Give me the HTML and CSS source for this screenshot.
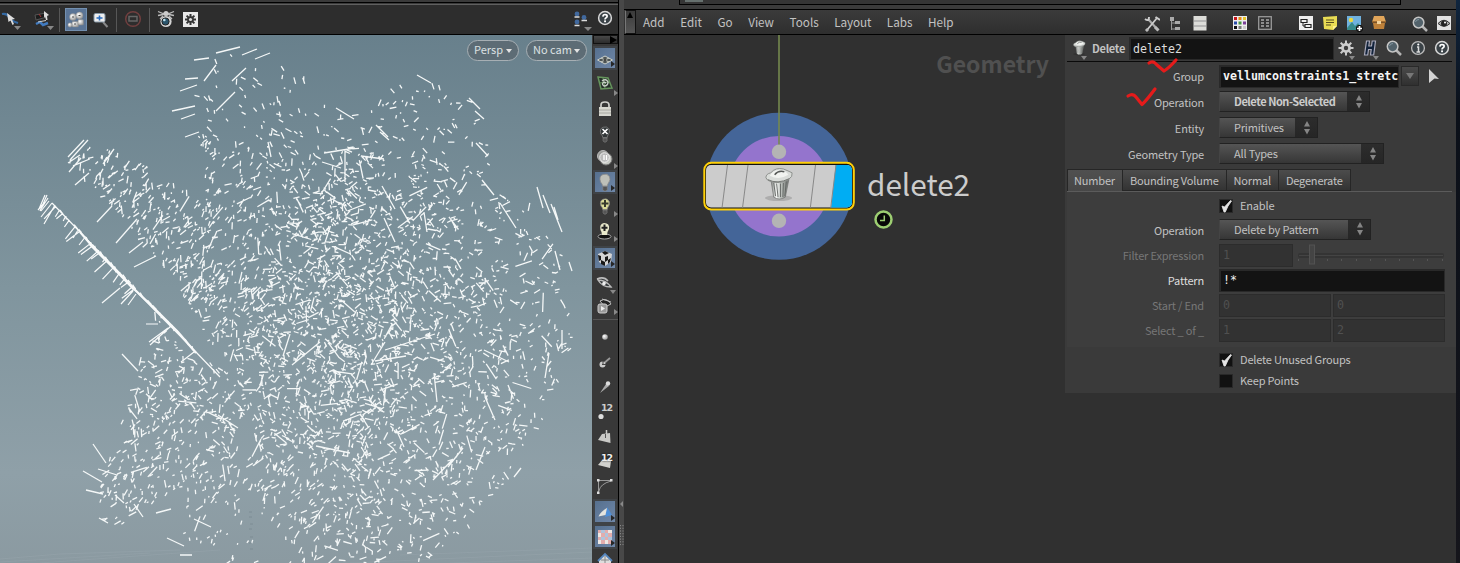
FILE: index.html
```html
<!DOCTYPE html>
<html lang="en">
<head>
<meta charset="utf-8">
<title>Geometry - delete2</title>
<link rel="stylesheet" href="styles.css">
</head>
<body>
<svg class="defs" width="0" height="0">
  <defs>
    <linearGradient id="can" x1="0" y1="0" x2="1" y2="0"><stop offset="0" stop-color="#777b78"/><stop offset=".3" stop-color="#f5f7f5"/><stop offset=".65" stop-color="#a9aeaa"/><stop offset="1" stop-color="#696c6a"/></linearGradient>
    <radialGradient id="ball" cx=".35" cy=".35" r=".7"><stop offset="0" stop-color="#fff"/><stop offset="1" stop-color="#999"/></radialGradient>
    <symbol id="trash" viewBox="0 0 30 34">
      <ellipse cx="14" cy="31" rx="14" ry="3" fill="#000" opacity=".15"/>
      <path d="M6 11L9 30Q15 34 21 30L25 10Z" fill="url(#can)" stroke="#707270" stroke-width=".7"/>
      <path d="M9 15L11 29M12 16L13.500 30M16 16V30M19 15.500L18.500 30M22 14L20.500 29" stroke="#5d605e" stroke-width=".9" fill="none"/>
      <path d="M1 10Q1 6 6 5Q11 -1 19 1Q24 3 28 5Q29 9 24 12Q15 17 6 14Q2 13 1 10Z" fill="#d9dcd9" stroke="#8b8e8b"/>
      <path d="M5 8Q8 2 16 2Q22 3 24 7Q15 13 5 8Z" fill="#f1f3f0"/>
      <path d="M10 7Q14 2 20 4" stroke="#555856" stroke-width="1.500" fill="none"/>
      <path d="M3 12Q13 17 25 11" stroke="#737673" fill="none"/>
    </symbol>
    <symbol id="help" viewBox="0 0 16 16"><circle cx="8" cy="8" r="6.400" fill="#3a4247" stroke="#d8d8d8" stroke-width="1.500"/><path d="M5.900 6.600Q6 4.500 8 4.500Q10.200 4.600 10.100 6.300Q10 7.300 8.800 7.900Q8 8.300 8 9.500" fill="none" stroke="#fff" stroke-width="1.700"/><rect x="7.100" y="10.400" width="1.900" height="1.800" fill="#fff"/></symbol>
    <symbol id="search" viewBox="0 0 16 16"><path d="M10 10L15 15" stroke="#b5b5b5" stroke-width="2.500"/><circle cx="6.600" cy="6.600" r="5.300" fill="#52626b" stroke="#c5c5c5" stroke-width="1.500"/><path d="M3.500 6Q4 3.500 7 3.500" stroke="#8195a0" fill="none"/></symbol>
    <symbol id="gear" viewBox="0 0 16 16"><path d="M8 .5V15.500M.5 8H15.500M2.700 2.700L13.300 13.300M13.300 2.700L2.700 13.300" stroke="currentColor" stroke-width="2"/><circle cx="8" cy="8" r="3.600" fill="none" stroke="currentColor" stroke-width="2.600"/><circle cx="8" cy="8" r="2.200" fill="#3a3a3a"/></symbol>
    <symbol id="bulb" viewBox="0 0 16 20"><path d="M5.500 14Q5.500 12 3.500 10Q1.500 4 6 2.500Q10 1 12.500 4.500Q14 8 11.500 11Q10.500 12 10.500 14Z" fill="currentColor" stroke="#888" stroke-width=".8"/><path d="M5.800 14.500H10.300V17.500L9 19H7L5.800 17.500Z" fill="#555" stroke="#888" stroke-width=".6"/></symbol>
    <symbol id="updown" viewBox="0 0 8 14"><path d="M4 0L7 5.500H1ZM4 13.500L1 8H7Z" fill="#858585"/></symbol>
    <symbol id="tick" viewBox="0 0 14 14"><path d="M3 7L5.500 8L11.500 1.500L12.500 2Q8.500 7 6.300 13H5Z" fill="#e4e4e4" stroke="#e4e4e4" stroke-width=".8"/></symbol>
  </defs>
</svg>

<div class="app">
  <section class="viewer">
    <div class="viewer-main">
      <header class="viewer-bar">
        <svg class="i-select" width="22" height="22"><path d="M2 6Q7 5 9 9T18 15" fill="none" stroke="#3469a3" stroke-width="2.200"/><path d="M7 5L15 11L12 11.500L14 16L12.500 17L10.500 12.500L8.500 14Z" fill="#ddd"/><path d="M14 18H21L17.500 22Z" fill="#888"/></svg>
        <svg class="i-snap" width="22" height="22"><path d="M2 7L13 5L14 9L3 12Z" fill="#1c1c1c" stroke="#555"/><path d="M3 16L7 14L10 17L15 15" fill="none" stroke="#417bc0" stroke-width="2.500"/><path d="M5 14L13 12.500" stroke="#ccc"/><path d="M6 6L8 9" stroke="#a33"/><path d="M11 3L16 7L14 8L14.500 12L13 12L12 8.500L11 10Z" fill="#ddd"/><path d="M14 18H21L17.500 22Z" fill="#888"/></svg>
        <i class="vsep s1"></i>
        <span class="i-active"><svg width="20" height="22"><g fill="url(#ball)" stroke="#888" stroke-width=".4"><circle cx="7" cy="8" r="3.500"/><circle cx="13.500" cy="6.500" r="3.500"/><rect x="6" y="12.500" width="6.500" height="5.500" rx="1"/><rect x="12" y="10.500" width="5.500" height="5.500" rx="1"/><circle cx="4" cy="16" r="2.200"/></g><path d="M6 8H8M12.500 6.500H14.500M8 15H10" stroke="#444"/></svg></span>
        <svg class="i-zoom" width="18" height="18"><path d="M10 10L14.500 15" stroke="#888" stroke-width="2"/><rect x="1" y="1.500" width="11" height="8.500" rx="1.500" fill="#eee" stroke="#8496a5"/><path d="M6.500 3.500V8.500M3.500 6H9.500" stroke="#266abe" stroke-width="1.600"/></svg>
        <i class="vsep s2"></i>
        <svg class="i-stop" width="18" height="18"><circle cx="9" cy="9" r="7.300" fill="none" stroke="#713f3f" stroke-width="1.500"/><rect x="5" y="6.500" width="8" height="4.500" fill="none" stroke="#666" stroke-width="1.500"/></svg>
        <i class="vsep s3"></i>
        <svg class="i-bug" width="18" height="18"><path d="M1 1.500L6 3.500L12 3.500L17 1.500M1 5.500L6 4.500H12L17 5.500M3 9L6 6M15 9L12 6" stroke="#bbb" stroke-width="1.300" fill="none"/><circle cx="9" cy="3.500" r="2.500" fill="#ccc"/><circle cx="9" cy="11.500" r="5.600" fill="#d3d3d3"/><circle cx="8.500" cy="11.500" r="3.600" fill="#2b556c" stroke="#222"/><circle cx="7.300" cy="10" r="1.300" fill="#bfe1ee"/></svg>
        <svg class="i-opts" width="15" height="15"><rect width="15" height="15" fill="#e8e8e8"/><g stroke="#333" stroke-width="2"><path d="M7.500 2V13M2 7.500H13M3.600 3.600L11.400 11.400M11.400 3.600L3.600 11.400"/></g><circle cx="7.500" cy="7.500" r="3.300" fill="#333"/><circle cx="7.500" cy="7.500" r="1.600" fill="#ddd"/></svg>
        <span class="grow"></span>
        <svg class="i-tree" width="20" height="22"><g fill="#41699e"><circle cx="4" cy="3" r="2.400"/><circle cx="4" cy="11" r="2.400"/><circle cx="11" cy="6.500" r="2.400"/></g><path d="M1.500 6H6.500M1.500 14.500H6.500M8.500 9.500H14" stroke="#ddd" stroke-width="1.300"/><path d="M11 16H19L15 20Z" fill="#888"/></svg>
        <svg class="i-help" width="16" height="16"><use href="#help"/></svg>
      </header>
      <div class="viewport">
        <svg class="cloud" viewBox="0 35 592 528" width="592" height="528">
          <g stroke="#a3b0b6" opacity=".25" fill="none"><path d="M0 559L60 554L180 550M0 562L150 553M40 563L220 550M400 555L592 548M350 563L592 552M450 563L592 558"/></g>
          <path id="strokes" fill="none" stroke="#f4f7f7" stroke-width="1.300"/>
          <path id="spine" fill="none" stroke="#f8fafa" stroke-width="1.200"/>
          <path d="M80 232L92 246" stroke="#f8fafa" stroke-width="2" fill="none"/>
          <path d="M90 244L110 264L134 289" stroke="#f8fafa" stroke-width="3" fill="none"/>
          <path d="M132 287L152 306L178 332L196 353" stroke="#f8fafa" stroke-width="2.200" fill="none"/>
          <path d="M249 512h3M249 517h3M250 524h3M249 529h3M250 537h3M249 543h3M250 549h3" stroke="#6e7f87" opacity=".5"/>
        </svg>
        <div class="pills"><button class="pill">Persp<b></b></button><button class="pill">No cam<b></b></button></div>
      </div>
    </div>
    <aside class="display-bar">
      <div class="mini"><svg width="8" height="8"><path d="M1 0L8 4L1 8Z" fill="#000"/></svg></div>
      <div class="cell on c24"><svg width="18" height="20"><path d="M1.500 12L9 8L16.500 12L9 16Z" fill="#4e5555" stroke="#cbd0ca"/><path d="M5 10L13 14M13 10L5 14" stroke="#cfd3cc"/><path d="M7 12L9 11L11 12L9 13Z" fill="#222"/></svg></div>
      <div class="cell more c27"><svg width="18" height="18"><path d="M2 2L12 3L16 13L5 14Z" fill="#25302a" stroke="#65945c" stroke-width="1.500"/><path d="M3 8L14 7M7 3L9 13" stroke="#65945c"/><path d="M6 6Q10 3 12 7Q12 11 8 11Q5 9 8 7L10 8" fill="none" stroke="#c8d0c8" stroke-width="1.400"/></svg></div>
      <div class="cell c24"><svg width="16" height="18"><path d="M4 8V5Q4 2 8 2T12 5V8" fill="none" stroke="#d0d0cd" stroke-width="1.700"/><rect x="2" y="7" width="12" height="9" fill="#d7d7d0"/><path d="M2 10H14M2 13H14" stroke="#a8a8a2"/></svg></div>
      <div class="cell c25"><svg width="16" height="18" class="dark-bulb"><use href="#bulb"/><path d="M5.500 4L10.500 9M10.500 4L5.500 9" stroke="#fff" stroke-width="1.600"/></svg></div>
      <div class="cell more c24"><svg width="18" height="18"><circle cx="7" cy="7" r="5.500" fill="#9b9c99" stroke="#bbb"/><circle cx="10" cy="10" r="6" fill="#c8cac4" stroke="#777"/><circle cx="8.500" cy="8.500" r="4.800" fill="#bbb" stroke="#eee"/><path d="M8 6V11M10.500 6V11" stroke="#fff" stroke-width="1.300"/></svg></div>
      <div class="cell on c24"><svg width="16" height="20" class="grey-bulb"><use href="#bulb"/></svg></div>
      <div class="cell more c24"><svg width="16" height="18" class="yellow-bulb"><use href="#bulb"/><path d="M8 3V10M4.500 6.500H11.500" stroke="#363b2d" stroke-width="2"/></svg></div>
      <div class="cell more c28 raise"><svg width="16" height="20"><ellipse cx="7.500" cy="15.500" rx="6.500" ry="2.500" fill="#111" stroke="#aaa"/><path d="M5 14Q5 11 3.500 9Q2 3 7 2Q13 2 12 8Q10 11 10 14Z" fill="#e9e9cc"/><path d="M7.500 3.500V10M4.500 6.800H10.500" stroke="#222" stroke-width="2"/></svg></div>
      <div class="cell on c24"><svg width="18" height="20"><path d="M2 6L9 3L16 6L15 14L9 18L3 14Z" fill="#d4d4d4"/><path d="M6 4.500L9 3L13 5L9 7ZM2 7L5 8V12L3 13ZM5 12L9 14V18L5 16ZM9 9L12 8V12L9 14ZM12 12L15 10L14 14L12 16Z" fill="#181818"/></svg></div>
      <div class="cell c26 down"><svg width="18" height="16"><path d="M1 4Q8 1 12 6M2 5Q6 12 15 12Q10 5 2 5Z" fill="#33373a" stroke="#bbb" stroke-width="1.500"/><circle cx="8" cy="8.500" r="1.800" fill="#eee"/></svg></div>
      <div class="cell more c23 raise"><svg width="18" height="18"><path d="M4 4Q11 0 15 7L9 10Z" fill="#242424" stroke="#bbb"/><path d="M6 2L15 5" stroke="#bbb"/><rect x="2" y="7" width="9" height="9" rx="2" fill="#999" stroke="#ccc"/><path d="M5 9L9 11.500L5 14Z" fill="#eee"/></svg></div>
      <i class="hsep"></i>
      <div class="cell c25"><svg width="16" height="16"><circle cx="8" cy="8" r="2.800" fill="url(#ball)"/></svg></div>
      <div class="cell c25"><svg width="16" height="16"><path d="M6 10L13 4" stroke="#999" stroke-width="1.800"/><circle cx="5.500" cy="10.500" r="3" fill="#ccc"/><path d="M6 11V7M5 10.500H9" stroke="#444"/></svg></div>
      <div class="cell c25"><svg width="16" height="16"><path d="M3 14L9 5L12 7Z" fill="#aaa"/><circle cx="11" cy="4.500" r="2.200" fill="#ddd"/></svg></div>
      <div class="cell c25 num"><span>12</span><svg width="16" height="16"><circle cx="4" cy="12.500" r="2.600" fill="#ddd"/></svg></div>
      <div class="cell c25"><svg width="18" height="18"><path d="M2 12L6 6L14 5L14.500 15Z" fill="#c9c9c6"/><path d="M10.500 10V2" stroke="#c9c9c6" stroke-width="1.500"/><path d="M9.500 10V6" stroke="#555"/></svg></div>
      <div class="cell c25 num mid"><svg width="18" height="18"><path d="M2 12L7 6L15 8L14 15Z" fill="#d1d1cd"/></svg><span>12</span></div>
      <div class="cell c25"><svg width="18" height="18"><path d="M2.500 15V2.500H16M3 13Q4 6 15 3" fill="none" stroke="#999" stroke-width="1"/><path d="M1 1h2.500v2.500H1ZM14 1h2.500v2.500H14ZM1 13.500h2.500V16H1Z" fill="#ddd"/></svg></div>
      <div class="cell on c25"><svg width="18" height="18"><path d="M11 4L16 12L9 14Z" fill="#4e8fd8"/><path d="M2.500 13.500Q5 8 11 5L9.500 12Z" fill="#e4e4df"/></svg></div>
      <div class="cell on c25"><svg width="14" height="14"><rect width="14" height="14" fill="#ede8e4"/><path d="M0 0h3v3H0ZM7 0h3v3H7ZM3 3h4v4H3ZM10 3h4v4h-4ZM0 7h3v3H0ZM7 7h3v3H7ZM3 10h4v4H3ZM10 10h4v4h-4Z" fill="#e3adad"/><path d="M3 0h4v3H3ZM7 3h3v4H7ZM3 7h4v3H3ZM10 7h4v3h-4Z" fill="#afc5dc"/></svg></div>
      <div class="cell c25 top"><svg width="18" height="18"><path d="M3 11L9 5L15 11V16H3Z" fill="#ddd"/><path d="M2 12L9 5L16 12" fill="none" stroke="#5686bd" stroke-width="1.800"/><path d="M9 7V16M5 11H13" stroke="#888"/></svg></div>
    </aside>
    <div class="splitter"><svg width="5" height="50"><path d="M4 1V7L1 4Z" fill="#888"/><path d="M1.500 25V46M4 25V46" stroke="#888" stroke-dasharray="1.200 1.500"/></svg></div>
  </section>

  <section class="network">
    <div class="pathbar"><span class="pathbox"><i></i></span></div>
    <nav class="menu">
      <span class="grip"><svg width="8" height="8"><path d="M4 1L7 7H1Z" fill="#000"/></svg></span>
      <a>Add</a><a>Edit</a><a>Go</a><a>View</a><a>Tools</a><a>Layout</a><a>Labs</a><a>Help</a>
      <span class="grow"></span>
      <svg class="m1" width="16" height="16"><path d="M4 3L14 14" stroke="#aaa" stroke-width="2.200"/><path d="M13 2L3 14" stroke="#ccc" stroke-width="1.800"/><path d="M1 3Q5 6 5 1M11.500 1L16 4" stroke="#ccc" stroke-width="2" fill="none"/><path d="M2 13L4 15M11 11L14.500 14.500" stroke="#bbb" stroke-width="3"/></svg>
      <svg class="m2" width="12" height="16"><path d="M2.500 3V14M2.500 7H6M2.500 13H6" stroke="#999" fill="none"/><path d="M1 1h4v4H1ZM6 5h5v3H6ZM6 11h5v3H6Z" fill="#aaa"/></svg>
      <svg class="m3" width="14" height="15"><rect x=".5" width="13" height="14.500" fill="#ddddd9"/><path d="M1 5H13M1 10H13" stroke="#aaa" stroke-width="1.500"/></svg>
      <svg class="m4" width="14" height="14"><rect width="14" height="14" fill="#eee"/><path fill="#c8161d" d="M1 1h3v3H1Z"/><path fill="#e58b19" d="M5.500 1h3v3h-3Z"/><path fill="#e7c529" d="M10 1h3v3h-3Z"/><path fill="#284ba8" d="M1 5.500h3v3H1Z"/><path fill="#43953f" d="M5.500 5.500h3v3h-3Z"/><path fill="#7b3f98" d="M10 5.500h3v3h-3Z"/><path fill="#111" d="M1 10h3v3H1Z"/><path fill="#777" d="M5.500 10h3v3h-3Z"/><path fill="#ccc" d="M10 10h3v3h-3Z"/></svg>
      <svg class="m5" width="14" height="14"><rect x=".7" y=".7" width="12.600" height="12.600" fill="#333" stroke="#999" stroke-width="1.300"/><path d="M3 4h3M8 4h3M3 7h3M8 7h3M3 10h3M8 10h3" stroke="#aaa" stroke-width="1.600"/></svg>
      <svg class="m6" width="14" height="14"><rect width="14" height="14" fill="#eee"/><path d="M2 3.500h6v3H2ZM6 8.500h6v3H6Z" fill="#eee" stroke="#222" stroke-width="1.200"/><path d="M4 7V10H6" stroke="#222" fill="none"/></svg>
      <svg class="m7" width="14" height="14"><path d="M0 1L14 0V10L10 14L1 13Z" fill="#e9dc54"/><path d="M3 4H11M3 6.500H11M3 9H8" stroke="#564e20" stroke-width="1.200"/><path d="M10 14V10H14Z" fill="#fff38c"/></svg>
      <svg class="m8" width="16" height="16"><rect width="14" height="14" fill="#70b2df"/><circle cx="4" cy="4" r="2.200" fill="#ead841"/><path d="M0 12L5 6L8 10L11 7L14 11V14H0Z" fill="#378a8b"/><path d="M12.500 9V16M9 12.500H16" stroke="#111" stroke-width="4"/><path d="M12.500 10V15M10 12.500H15" stroke="#fff" stroke-width="1.700"/></svg>
      <svg class="m9" width="16" height="14"><path d="M2 7H14L13 13H3Z" fill="#bd8039"/><path d="M3 0H13L15 6H1Z" fill="#e0a55a"/><path d="M1 6H15" stroke="#8f5c26" stroke-width="1.500"/><rect x="6" y="5" width="4" height="3" fill="#f0d29c"/></svg>
      <svg class="m10" width="16" height="16"><use href="#search"/></svg>
      <svg class="m11" width="14" height="14"><rect width="14" height="14" fill="#e2e2e2"/><path d="M1 7.500Q7 1 13 7.500Q7 13 1 7.500Z" fill="#aaa" stroke="#333"/><circle cx="7" cy="7.500" r="3" fill="#222"/><circle cx="8" cy="6.500" r="1" fill="#fff"/></svg>
    </nav>
    <div class="work">
      <div class="canvas">
        <div class="context">Geometry</div>
        <svg class="node" width="441" height="528" viewBox="624 35 441 528">
          <circle cx="779" cy="186.300" r="73.500" fill="#446598"/>
          <circle cx="779" cy="186.300" r="50.300" fill="#9474cd"/>
          <path d="M779 35V152" stroke="#75894f" stroke-width="1.600"/>
          <circle cx="779" cy="151.800" r="7.200" fill="#b4b4b4"/><circle cx="779" cy="220.800" r="7.200" fill="#b4b4b4"/>
          <rect x="704.300" y="162.800" width="149.500" height="46.800" rx="7" fill="#111" stroke="#ffd008" stroke-width="2"/>
          <clipPath id="nodeclip"><rect x="706" y="165" width="146" height="42.500" rx="5"/></clipPath>
          <g clip-path="url(#nodeclip)"><path d="M706 165H852V208H706Z" fill="#ccc"/><path d="M835.700 165H852V208H831Z" fill="#00adf3"/><path d="M727.500 165L722 208M748 165L742.500 208M815.500 165L810.300 208M836 165L830.700 208" stroke="#888"/></g>
          <svg x="764.500" y="168" width="30" height="33"><use href="#trash"/></svg>
          <circle cx="883.500" cy="219.500" r="8" fill="#080808" stroke="#9dce72" stroke-width="2.500"/><path d="M884.300 215.500V220.500H880" fill="none" stroke="#9dce72" stroke-width="1.500"/>
        </svg>
        <div class="node-name">delete2</div>
      </div>
      <div class="params">
        <div class="name-row">
          <span class="dropicon trashi"><svg width="13" height="16"><use href="#trash"/></svg></span>
          <strong>Delete</strong>
          <div class="field dark name">delete2</div>
          <span class="tools">
            <span class="dropicon"><svg width="16" height="16" class="gear"><use href="#gear"/></svg></span>
            <span class="dropicon"><svg width="16" height="16"><path d="M4.500 1H7.500L6.800 6H9.500L10.200 1H13.500L11.700 15H8.500L9.200 9.500H6.500L5.700 15H2.500Z" fill="#12233b" stroke="#aab" stroke-width="1.200"/></svg></span>
            <span><svg width="16" height="16"><use href="#search"/></svg></span>
            <span><svg width="16" height="16"><circle cx="8" cy="8" r="6.400" fill="#3a4247" stroke="#bbb" stroke-width="1.300"/><path d="M7 7H8.500V11.500M6.500 12H10" stroke="#ddd" stroke-width="1.500" fill="none"/><circle cx="8.300" cy="4.500" r="1.100" fill="#fff"/></svg></span>
            <span><svg width="16" height="16"><use href="#help"/></svg></span>
          </span>
        </div>
        <div class="rows main">
          <div class="row"><label>Group</label><div class="field dark group">vellumconstraints1_stretc</div><button class="drop"><svg width="8" height="6"><path d="M0 0H8L4 6Z" fill="#777"/></svg></button><svg class="cursor" width="12" height="15"><path d="M1 0L11 10L6.500 9.500L1 14Z" fill="#d4d4d4"/></svg></div>
          <div class="row"><label>Operation</label><div class="select w150 bold"><span>Delete Non-Selected</span><svg width="8" height="14"><use href="#updown"/></svg></div></div>
          <div class="row"><label>Entity</label><div class="select w98"><span>Primitives</span><svg width="8" height="14"><use href="#updown"/></svg></div></div>
          <div class="row"><label>Geometry Type</label><div class="select w164"><span>All Types</span><svg width="8" height="14"><use href="#updown"/></svg></div></div>
        </div>
        <div class="tabs"><a class="cur">Number</a><a>Bounding Volume</a><a>Normal</a><a>Degenerate</a></div>
        <div class="rows folder">
          <div class="row"><label></label><i class="check"><svg width="14" height="14"><use href="#tick"/></svg></i><span class="text">Enable</span></div>
          <div class="row"><label>Operation</label><div class="select w151"><span>Delete by Pattern</span><svg width="8" height="14"><use href="#updown"/></svg></div></div>
          <div class="row off"><label>Filter Expression</label><div class="field w74">1</div><svg class="slider" width="148" height="22"><rect x="1" y="9" width="146" height="5" rx="2" fill="#343434"/><path d="M2 11.500H146" stroke="#444"/><path d="M1.500 15V17M30.500 15V17M44.500 15V17M59.500 15V17M73.500 15V17M88.500 15V17M102.500 15V17M116.500 15V17M130.500 15V17M145.500 15V17" stroke="#555"/><rect x="12.500" y="1" width="5" height="19" fill="#444" stroke="#525252"/></svg></div>
          <div class="row"><label class="hot">Pattern</label><div class="field dark wide">!*</div></div>
          <div class="row off"><label>Start / End</label><div class="field half">0</div><div class="field half">0</div></div>
          <div class="row off"><label>Select _ of _</label><div class="field half">1</div><div class="field half">2</div></div>
        </div>
        <div class="rows extra">
          <div class="row"><label></label><i class="check"><svg width="14" height="14"><use href="#tick"/></svg></i><span class="text">Delete Unused Groups</span></div>
          <div class="row"><label></label><i class="check"></i><span class="text">Keep Points</span></div>
        </div>
        <svg class="marks" width="60" height="50"><path d="M23 3Q27 0 31 5L38 11Q43 8 50 0M2 36Q7 33 10 37L16 44.500Q20 41 29 29" fill="none" stroke="#e51b1b" stroke-width="3.200" stroke-linecap="round" stroke-linejoin="round"/></svg>
      </div>
    </div>
  </section>
  <div class="edge"></div>
</div>
<script src="cloud.js"></script>
</body>
</html>
```

FILE: styles.css
```css
* { box-sizing: border-box; }
body { margin: 0; overflow: hidden; background: #303030; color: #c2c2c2; font: 12px/16px "Noto Sans CJK SC", "Open Sans", sans-serif; }
svg { display: block; flex: none; }
button { font: inherit; color: inherit; padding: 0; }
.defs { position: absolute; }
.grow { flex: 1; }
.app { display: flex; width: 1460px; height: 563px; overflow: hidden; }

.viewer { display: grid; grid-template-columns: 592px 27px 5px; grid-template-rows: 35px 528px; width: 624px; flex: none; }
.viewer-main { display: contents; }
.viewer-bar { grid-column: 1 / 3; display: flex; align-items: flex-start; background: linear-gradient(#3a3a3a 0 2px, #000 2px 3px, #3a3a3a 3px 4px, #606060 4px 5px, #2d2d2d 5px 34px, #000 34px); border-right: 1px solid #000; padding-top: 8px; }
.i-snap { margin-left: 11px; }
.vsep { width: 1px; height: 24px; background: #575757; flex: none; }
.s1 { margin-left: 4px; }
.i-active { width: 22px; height: 23px; margin-left: 5px; background: #5a7496; border: 1px solid #7390b0; }
.i-zoom { margin: 4px 0 0 6px; }
.s2 { margin-left: 5px; }
.i-stop { margin: 2px 0 0 7px; }
.s3 { margin-left: 7px; }
.i-bug { margin: 2px 0 0 7px; }
.i-opts { margin: 4px 0 0 8px; }
.i-tree { margin: 3px 4px 0 0; }
.i-help { margin: 2px 5px 0 0; }

.viewport { grid-column: 1; grid-row: 2; position: relative; background: linear-gradient(#68808c, #80959e 48%, #8fa0a8 83%, #8b9aa1); overflow: hidden; }
.pills { position: absolute; top: 5px; right: 5px; display: flex; gap: 7px; }
.pill { display: flex; align-items: center; justify-content: space-between; width: 52px; height: 21px; padding: 0 6px 3px; border: 1px solid #a7afb4; border-radius: 11px; background: #5d6c75; color: #dce1e3; font-size: 11px; white-space: nowrap; }
.pill + .pill { width: 61px; }
.pill b { border: 3px solid transparent; border-top: 4px solid #e3e3e3; border-bottom: 0; margin-top: 4px; }

.display-bar { grid-column: 2; grid-row: 2; background: #383838; border-right: 1px solid #000; padding-left: 1px; overflow: hidden; }
.mini { height: 9px; margin-bottom: 2px; border: 1px solid #111; background: linear-gradient(#484848, #2c2c2c); display: flex; justify-content: flex-end; }
.cell { position: relative; display: flex; align-items: center; justify-content: center; width: 24px; }
.c23 { height: 23px; } .c24 { height: 24px; } .c25 { height: 25px; } .c26 { height: 26px; } .c27 { height: 27px; } .c28 { height: 28px; }
.on { background: linear-gradient(135deg, #56708f, #6f87a8); border: 2px solid #3f4347; }
.on::after, .more::after { content: ""; position: absolute; right: 0; bottom: 1px; border: 3px solid transparent; border-left: 4px solid #262626; border-right: 0; }
.more::after { border-left-color: #888; right: -1px; }
.down::after { content: ""; position: absolute; right: 1px; bottom: 2px; border: 3px solid transparent; border-top: 4px solid #888; border-bottom: 0; }
.raise { padding-bottom: 3px; }
.raise::after { bottom: 4px; }
.hsep { display: block; height: 1px; background: #555; margin-bottom: 4px; }
.dark-bulb { color: #313637; }
.grey-bulb { color: #bec0b9; }
.yellow-bulb { color: #dadc97; }
.num span { position: absolute; left: 8px; top: 2px; font: bold 9.5px/14px "DejaVu Sans", sans-serif; letter-spacing: -1px; color: #ccc; }
.num.mid span { color: #eee; text-shadow: 0 0 2px #000; }
.top { align-items: flex-start; }

.splitter { grid-column: 3; grid-row: 1 / 3; background: #484848; padding-top: 500px; }

.network { flex: none; width: 832px; display: flex; flex-direction: column; }
.pathbar { height: 10px; background: #3b3b3b; border-bottom: 1px solid #000; padding-left: 55px; }
.pathbox { display: block; width: 722px; height: 5px; border: solid #000; border-width: 0 1px 1px; background: #353535; }
.pathbox i { display: block; width: 18px; height: 2px; margin-left: 5px; background: #66706e; }
.menu { display: flex; align-items: flex-start; height: 25px; border-bottom: 1px solid #000; background: linear-gradient(#3b3b3b, #2e2e2e); padding-right: 5px; }
.menu a { margin: 4px 15.6px 0 0; font-size: 11.7px; }
.menu a:nth-of-type(6) { letter-spacing: -.1px; }
.grip { width: 11px; height: 24px; margin: 0 7px 0 1px; border: 1px solid #111; border-left-color: #777; background: linear-gradient(#3b3b3b, #555); }
.menu svg { margin-top: 6px; }
.menu .grip svg { margin: 0; }
.menu .m1 { margin-right: 9px; } .m2 { margin-right: 12px; } .m3 { margin-right: 26px; } .m4 { margin-right: 11px; }
.m5 { margin-right: 27px; } .m6 { margin-right: 10px; } .m7 { margin-right: 10px; } .m8 { margin-right: 8px; }
.m9 { margin-right: 25px; } .m10 { margin-right: 9px; }

.work { display: flex; flex: 1; }
.canvas { position: relative; width: 441px; background: #303030; }
.context { position: absolute; right: 16px; top: 10px; font-size: 23px; line-height: 36px; font-weight: 700; color: #505050; }
.node-name { position: absolute; left: 243px; top: 126px; font-size: 29.7px; line-height: 46px; color: #ccc; }

.params { position: relative; width: 391px; height: 358px; background: #3a3a3a; font-size: 11px; letter-spacing: -.18px; }
.name-row { display: flex; align-items: center; height: 27px; margin: 0 4px 0 2px; border-bottom: 1px solid #0a0a0a; }
.name-row strong { width: 38px; margin-left: 6px; white-space: nowrap; font-size: 11px; letter-spacing: -.3px; }
.dropicon { position: relative; }
.dropicon::after { content: ""; position: absolute; right: -1px; bottom: -4px; border: 3px solid transparent; border-top: 4px solid #888; border-bottom: 0; }
.trashi { margin-left: 6px; }
.gear { color: #ccc; }
.field { height: 23px; padding: 0 0 0 3px; line-height: 21px; border: 1px solid #2c2c2c; background: #323232; color: #505050; font-family: "DejaVu Sans Mono", monospace; font-size: 11.65px; letter-spacing: 0; overflow: hidden; white-space: nowrap; flex: none; }
.dark { background: #131313; border: 2px solid #292929; border-width: 2px 1px 1px 2px; color: #f4f4f4; padding-left: 2px; line-height: 19px; }
.name { width: 205px; margin-left: -1px; color: #ddd; line-height: 21px; }
.tools { display: flex; gap: 8px; margin-left: 4px; }
.row { display: flex; align-items: center; white-space: nowrap; }
.row label { width: 139px; margin-right: 15px; text-align: right; flex: none; padding-bottom: 1px; }
.main { padding-top: 1px; }
.main .row { height: 26px; }
.main .group { width: 180px; margin-top: 1px; font-weight: bold; }
.drop { display: grid; place-items: center; width: 18px; height: 20px; margin: 0 9px 0 2px; border: 1px solid #292929; background: linear-gradient(#4a4a4a, #303030); }
.select { display: flex; align-items: center; justify-content: space-between; height: 21px; margin-bottom: 1px; padding: 0 6px 0 14px; border: 1px solid #222; border-left-color: #444; background: linear-gradient(90deg, transparent calc(100% - 22px), #222c calc(100% - 22px)), linear-gradient(#555, #363636); }
.select span { padding-bottom: 1px; }
.w150 { width: 151px; } .w98 { width: 99px; } .w164 { width: 165px; } .w151 { width: 152px; } .w74 { width: 74px; }
.bold span { font-weight: bold; letter-spacing: -.45px; color: #ccc; }
.tabs { display: flex; height: 23px; margin: 2px 4px 0 2px; border-bottom: 1px solid #5b5b5b; }
.tabs a { height: 22px; padding: 2px 7px 0; border: 1px solid #262626; border-left-width: 0; background: linear-gradient(#4c4c4c, #333); }
.tabs .cur { padding-left: 6px; border-left-width: 1px; background: linear-gradient(#505050, #474747); border-bottom: 0; }
.folder { height: 155px; margin-left: 2px; padding-top: 2px; background: #3d3d3d; }
.folder .row label { width: 137px; padding: 0 0 2px; }
.folder .row { height: 25px; }
.folder .row:first-child { height: 24px; }
.folder .select { margin-bottom: 3px; }
.off { color: #777; }
.slider { margin: 0 0 1px 4px; }
.wide { width: 226px; }
.half { width: 112px; margin-right: 2px; }
.check { width: 14px; height: 14px; margin-right: 7px; background: #111; border: 1px solid #292929; }
.check svg { margin: -1px; }
.text { padding-bottom: 2px; }
.hot { color: #ddd; }
.extra { padding-top: 2px; }
.extra .row { height: 21px; }
.marks { position: absolute; left: 61px; top: 25px; overflow: visible; }
.edge { width: 4px; background: linear-gradient(#0f253e, #0b1019 20%, #15151b); }
```

FILE: cloud.js
```js
// Seeded generator keeps the constraint cloud identical on each load.
let seed = 7331;
const rnd = () => {
  seed = (seed * 1664525 + 1013904223) >>> 0;
  return seed / 4294967296;
};
const outline = [[68,160],[88,140],[112,152],[150,168],[190,195],[207,205],[203,150],[197,135],[196,80],[205,60],[240,50],[275,55],[305,75],[335,112],[370,112],[385,92],[420,77],[455,83],[480,105],[487,140],[492,175],[503,195],[530,205],[545,230],[562,250],[573,300],[571,350],[555,390],[535,435],[510,470],[500,498],[475,530],[425,563],[205,563],[175,545],[185,512],[190,490],[172,490],[150,510],[122,528],[98,516],[100,485],[115,440],[132,395],[140,350],[135,325],[152,310],[206,368],[213,350],[190,305],[168,270],[142,244],[120,212],[96,192]];
const inside = (x, y) => {
  let hit = false;
  for (let i = 0, j = outline.length - 1; i < outline.length; j = i++) {
    const [a, b] = outline[i], [c, d] = outline[j];
    if ((b > y) !== (d > y) && x < (c - a) * (y - b) / (d - b) + a) hit = !hit;
  }
  return hit;
};
const bump = (x, y, cx, cy, sx, sy) => Math.exp(-(((x - cx) / sx) ** 2) - (((y - cy) / sy) ** 2));
const density = (x, y) => {
  let d = 0.16 + 0.65 * bump(x, y, 310, 300, 110, 115) + 0.32 * bump(x, y, 400, 330, 130, 150) + 0.45 * bump(x, y, 340, 450, 100, 60) + 0.3 * bump(x, y, 345, 190, 25, 50) + 0.25 * bump(x, y, 370, 540, 60, 40);
  if (y < 150) d *= 0.85;
  if (x < 215 && y > 135 && y < 300) d += 0.34;
  if (x < 215 && y > 360 && y < 520) d += 0.28;
  if (y > 490 && x > 175 && x < 290) d *= 0.75;
  return d;
};
const angle = (x, y) => {
  if (x < 260 && y > 140 && y < 310) return -0.95 + (rnd() - 0.5) * 1.6;
  if (y < 160 && x < 340) return 1 + (rnd() - 0.5) * 1.5;
  if (x < 200 && y > 420) return -1 + (rnd() - 0.5) * 1.7;
  if (y > 460 && x < 330) return -1.05 + (rnd() - 0.5) * 1.4;
  return rnd() * Math.PI;
};
let path = "";
for (let n = 0; n < 12000; n++) {
  const x = 65 + rnd() * 512, y = 45 + rnd() * 518;
  if (!inside(x, y) || rnd() > density(x, y)) continue;
  const r = rnd(), sparse = y < 160;
  const len = r < 0.025 && !sparse ? 11 + rnd() * 9 : r < 0.3 ? 5 + rnd() * (sparse ? 2 : 4) : 1.5 + rnd() * 3.5;
  const a = angle(x, y), dx = Math.cos(a) * len / 2, dy = Math.sin(a) * len / 2;
  path += `M${(x - dx).toFixed(1)} ${(y - dy).toFixed(1)}L${(x + dx).toFixed(1)} ${(y + dy).toFixed(1)}`;
}
// Stray long constraints around the silhouette.
const long = [
  [194,60,209,58],[216,53,240,47],[242,55,257,49],[255,59,270,53],[185,79,198,78],[180,91,197,85],[172,111,195,106],[181,119,195,114],[185,137,199,132],[204,81,216,65],[232,81,246,68],[216,111,235,92],
  [68,157,84,140],[70,160,88,140],[68,163,80,155],[69,172,81,158],[75,185,89,173],[103,164,114,149],[97,222,112,206],[116,243,137,219],[129,253,143,242],[134,267,156,256],
  [417,75,431,83],[469,98,480,109],[475,111,484,119],[476,143,488,156],[482,180,494,195],[500,203,516,228],[537,187,543,208],[543,195,550,213],[551,204,562,232],[554,207,558,220],[555,251,560,270],[569,262,572,271],[336,108,354,119],
  [93,444,106,463],[83,471,102,482],[98,469,117,475],[86,490,103,494],[99,518,108,523],[115,495,124,503],[122,354,138,371],[102,303,120,288],[167,538,184,546],[180,555,192,555],[194,519,211,527],[156,513,171,509],[134,504,143,517],
  [218,415,238,428],[324,153,355,148],[322,162,341,168],[345,150,345,182],[361,156,384,159],[380,132,389,140],[382,186,395,209],[424,212,427,232],[384,218,395,242],[434,373,437,402],[371,365,385,342],[375,361,406,356],[385,350,435,334],[484,350,509,362],[485,397,495,420],[448,467,463,448],[433,480,453,459],[476,470,485,447],[316,446,350,453],[290,334,283,356],[292,365,320,342],[562,330,562,349],[545,378,549,353],[514,477,521,468],[404,447,396,429],[268,142,271,157],[376,125,388,137]
];
for (const [a, b, c, d] of long) path += `M${a} ${b}L${c} ${d}`;
document.getElementById("strokes").setAttribute("d", path);

// Dense diagonal edge with its comb of short side strokes.
let spine = "M52 203L80 232L130 285L194 350L220 377";
for (let x = 56; x < 138; x += 1.5 + rnd() * 5) {
  const y = 206 + (x - 56) * 1.03, len = 5 + rnd() * 14, a = 0.45 + rnd() * 0.5;
  spine += `M${x.toFixed(1)} ${y.toFixed(1)}l${(-len * Math.sin(a)).toFixed(1)} ${(len * Math.cos(a)).toFixed(1)}`;
}
for (let x = 60; x < 195; x += 4 + rnd() * 5) {
  const y = 210 + (x - 60) * 1.03;
  spine += `M${x.toFixed(1)} ${y.toFixed(1)}l${(rnd() * 4).toFixed(1)} ${(3 + rnd() * 3).toFixed(1)}`;
}
spine += "M45 195L39 209M47 195L40 211M48 198L41 209M45 202L38 210M49 201L41 211M52 203L41 217M55 205L44 224M133 291L121 304M136 294L128 305M171 326L150 345M168 328L149 342M146 324L158 324M181 362L194 352";
document.getElementById("spine").setAttribute("d", spine);
```
